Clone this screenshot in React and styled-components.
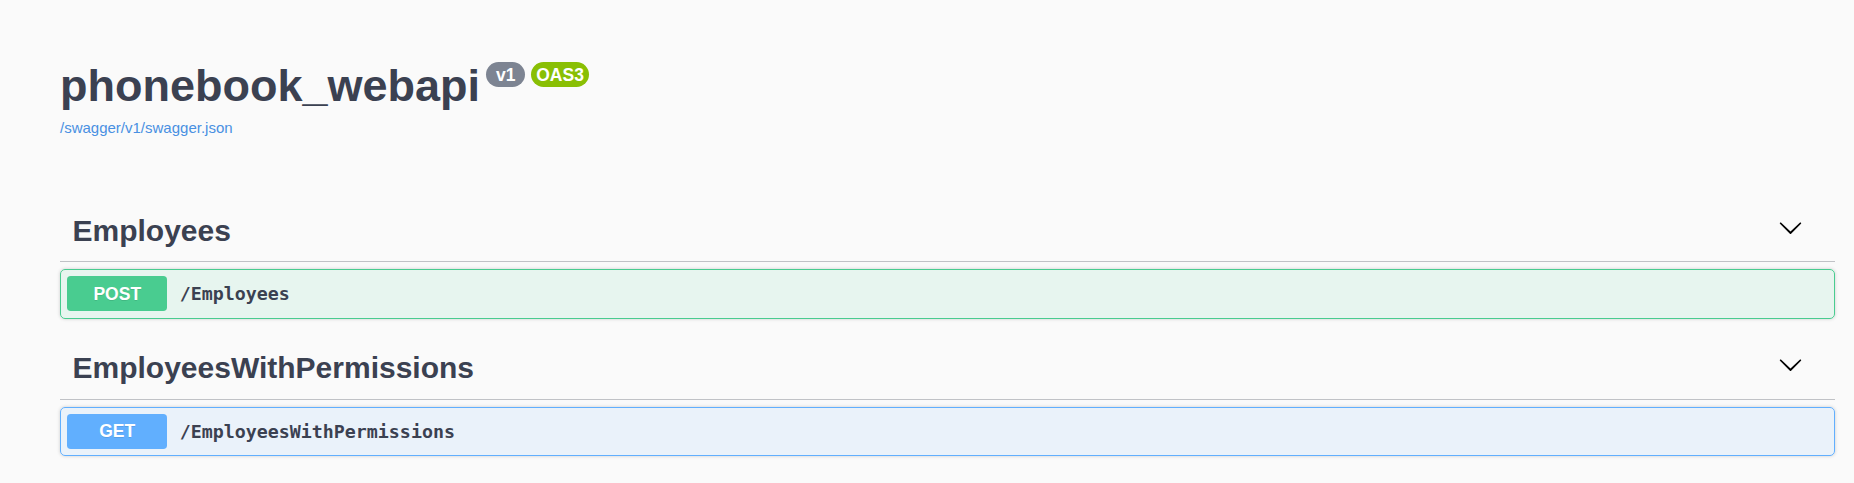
import React from "react";
import styled, { createGlobalStyle } from "styled-components";

const GlobalStyle = createGlobalStyle`
  body {
    margin: 0;
    background: #fafafa;
    font-family: "Liberation Sans", Arial, sans-serif;
  }
`;

// Page frame
const Wrapper = styled.div`
  width: 1775px;
  margin-left: 60px;
  padding-top: 60px;
`;

const InfoBlock = styled.div`
  display: flex;
  flex-direction: column;
  align-items: flex-start;
`;

const TitleRow = styled.div`
  display: flex;
  align-items: flex-start;
`;

const Title = styled.h2`
  margin: 0;
  font-size: 45px;
  line-height: 52px;
  font-weight: 700;
  color: #3b4151;
`;

const Badge = styled.small`
  display: inline-block;
  margin: 2px 0 0 6px;
  padding: 2.5px 5px;
  border-radius: 57px;
  background: ${(props) => props.$color};
`;

const BadgeText = styled.pre`
  margin: 0;
  font-family: "Liberation Sans", Arial, sans-serif;
  font-size: 17.5px;
  line-height: 20px;
  font-weight: 700;
  color: #fff;
`;

const SpecLink = styled.a`
  display: block;
  margin-top: 7px;
  font-size: 15px;
  line-height: 17px;
  color: #4990e2;
  text-decoration: none;
`;

// Operation tags
const Tags = styled.div`
  margin-top: 65px;
`;

const TagSection = styled.section``;

const TagHeader = styled.h3`
  display: flex;
  align-items: center;
  margin: 0 0 7px;
  padding: 11.5px 25px 13.5px 12.5px;
  border-bottom: 1px solid rgba(59, 65, 81, 0.3);
`;

const TagName = styled.span`
  flex: 1;
  font-size: 30px;
  line-height: 35px;
  font-weight: 700;
  color: #3b4151;
`;

const ExpandButton = styled.button`
  display: flex;
  margin-bottom: 6px;
  padding: 0 7.5px;
  background: none;
  border: none;
  cursor: pointer;

  svg {
    display: block;
    width: 25px;
    height: 25px;
  }
`;

const Operation = styled.div`
  display: flex;
  align-items: center;
  margin-bottom: 20px;
  padding: 6.25px;
  border: 1px solid ${(props) => props.$color};
  border-radius: 5px;
  background: ${(props) => props.$bg};
  box-shadow: 0 0 3.75px rgba(0, 0, 0, 0.19);
`;

const Method = styled.span`
  min-width: 100px;
  padding: 7.5px 0;
  border-radius: 3.75px;
  background: ${(props) => props.$color};
  color: #fff;
  font-size: 17.5px;
  line-height: 20px;
  font-weight: 700;
  text-align: center;
  text-shadow: 0 1px 0 rgba(0, 0, 0, 0.1);
`;

const Path = styled.span`
  padding: 0 12.5px;
  font-family: "DejaVu Sans Mono", "Liberation Mono", monospace;
  font-size: 18.3px;
  font-weight: 700;
  color: #3b4151;
`;

const methodColors = {
  POST: { color: "#49cc90", bg: "rgba(73, 204, 144, 0.1)" },
  GET: { color: "#61affe", bg: "rgba(97, 175, 254, 0.1)" },
};

const tags = [
  { name: "Employees", ops: [{ method: "POST", path: "/Employees" }] },
  {
    name: "EmployeesWithPermissions",
    ops: [{ method: "GET", path: "/EmployeesWithPermissions" }],
  },
];

const ArrowDown = () => (
  <svg viewBox="0 0 20 20" aria-hidden="true">
    <path d="M17.418 6.109c.272-.268.709-.268.979 0s.271.701 0 .969l-7.908 7.83c-.27.268-.707.268-.979 0l-7.908-7.830c-.27-.268-.27-.701 0-.969.271-.268.709-.268.979 0L10 13.25l7.418-7.141z" />
  </svg>
);

export default function App() {
  return (
    <>
      <GlobalStyle />
      <Wrapper>
        <InfoBlock>
          <TitleRow>
            <Title>phonebook_webapi</Title>
            <Badge $color="#7d8492">
              <BadgeText> v1 </BadgeText>
            </Badge>
            <Badge $color="#89bf04">
              <BadgeText>OAS3</BadgeText>
            </Badge>
          </TitleRow>
          <SpecLink href="#">/swagger/v1/swagger.json</SpecLink>
        </InfoBlock>

        <Tags>
          {tags.map((tag) => (
            <TagSection key={tag.name}>
              <TagHeader>
                <TagName>{tag.name}</TagName>
                <ExpandButton aria-label="expand">
                  <ArrowDown />
                </ExpandButton>
              </TagHeader>
              {tag.ops.map((op) => (
                <Operation
                  key={op.path}
                  $color={methodColors[op.method].color}
                  $bg={methodColors[op.method].bg}
                >
                  <Method $color={methodColors[op.method].color}>{op.method}</Method>
                  <Path>{op.path}</Path>
                </Operation>
              ))}
            </TagSection>
          ))}
        </Tags>
      </Wrapper>
    </>
  );
}
